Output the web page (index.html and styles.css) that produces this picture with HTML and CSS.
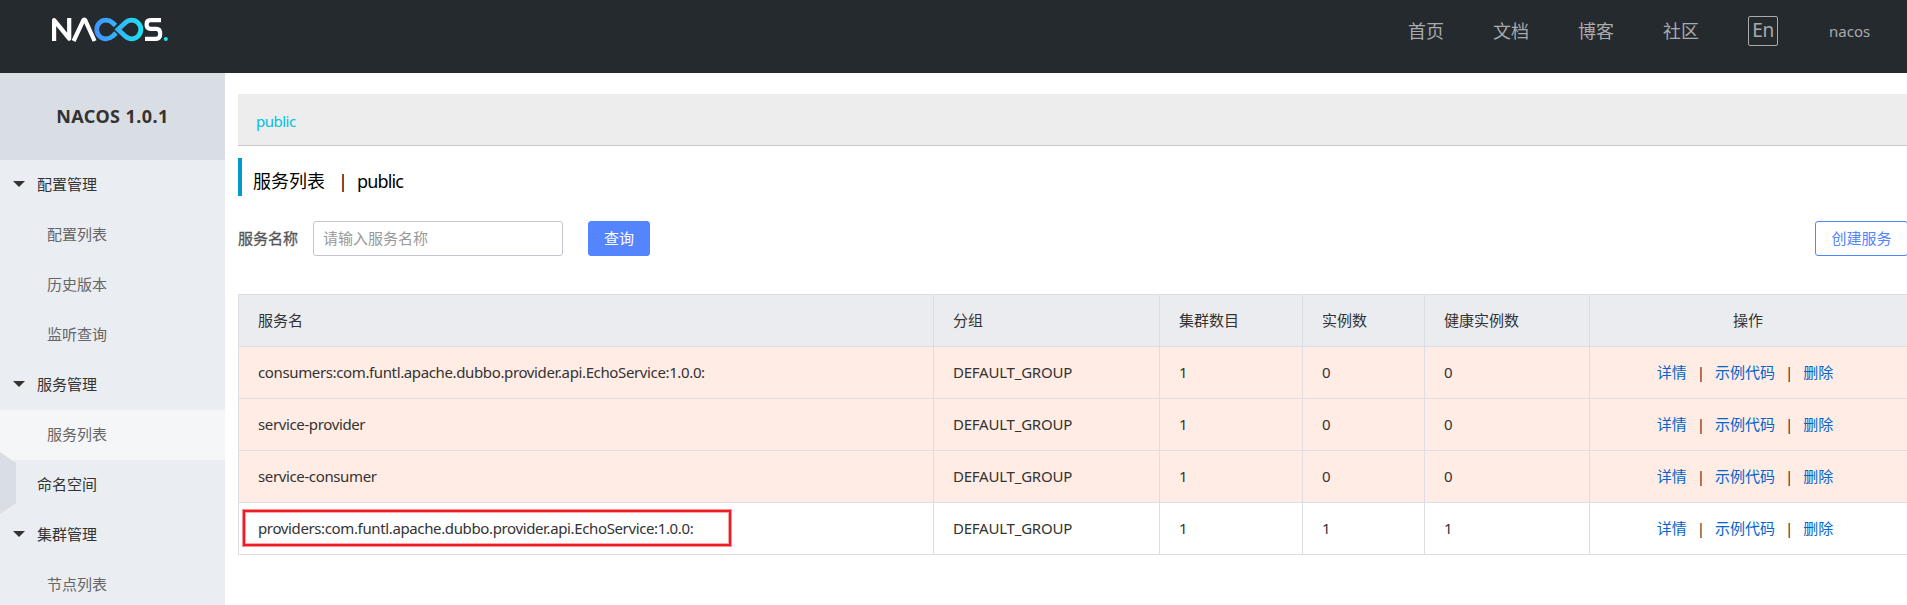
FILE: index.html
```html
<!DOCTYPE html>
<html lang="zh-CN">
<head>
<meta charset="utf-8">
<title>Nacos</title>
<link rel="stylesheet" href="styles.css">
</head>
<body>
<header class="header">
  <svg class="logo" width="118" height="26" viewBox="0 0 118 26" fill="none">
    <defs>
      <linearGradient id="loop" gradientUnits="userSpaceOnUse" x1="44" y1="0" x2="92" y2="0">
        <stop offset="0" stop-color="#4590ff"/>
        <stop offset="1" stop-color="#1be3f2"/>
      </linearGradient>
    </defs>
    <g stroke="#fff" stroke-width="4.2" stroke-linejoin="round">
      <path d="M3.1 25V4.2L18.2 22.6V2"/>
      <path d="M22.6 25L32.4 4.1Q33.3 3.4 34.2 4.1L43.6 25"/>
      <path d="M110 4.1H99.6Q95.6 4.1 95.6 8.4Q95.6 12.8 99.6 12.8H105.4Q109.2 12.8 109.2 17.8Q109.2 22.8 105 22.8H94"/>
    </g>
    <g stroke="url(#loop)" stroke-width="4.8">
      <path d="M64.5 9.4L61.9 7Q58.6 4.2 54.9 4.2A9.2 9.3 0 0 0 54.9 22.8Q58.6 22.8 61.9 20L65 17"/>
      <path d="M67 13.5L74 7Q77 4.2 80.6 4.2A9.2 9.3 0 0 1 80.6 22.8Q77 22.8 74 20Z"/>
    </g>
    <circle cx="114.8" cy="23" r="2.1" fill="#1be3f2"/>
  </svg>
  <nav class="nav">
    <a class="nav-item">首页</a>
    <a class="nav-item">文档</a>
    <a class="nav-item">博客</a>
    <a class="nav-item">社区</a>
    <span class="lang">En</span>
    <span class="user">nacos</span>
  </nav>
</header>
<div class="layout">
  <aside class="sidebar">
    <h1 class="side-title"><span>NACOS 1.0.1</span></h1>
    <ul class="menu">
      <li class="group"><i class="caret"></i>配置管理</li>
      <li class="item">配置列表</li>
      <li class="item">历史版本</li>
      <li class="item">监听查询</li>
      <li class="group"><i class="caret"></i>服务管理</li>
      <li class="item active">服务列表</li>
      <li class="group">命名空间</li>
      <li class="group"><i class="caret"></i>集群管理</li>
      <li class="item">节点列表</li>
    </ul>
    <svg class="collapse" width="16" height="62" viewBox="0 0 16 62"><path d="M0 0L16 11V51L0 62Z" fill="#d9dde4"/></svg>
  </aside>
  <main class="main">
    <div class="namespace"><span>public</span></div>
    <h2 class="page-title"><span>服务列表</span><span class="bar">|</span><span class="space">public</span></h2>
    <form class="search">
      <label class="label" for="name">服务名称</label>
      <input class="input" id="name" placeholder="请输入服务名称">
      <button class="btn primary" type="button">查询</button>
      <button class="btn outline" type="button">创建服务</button>
    </form>
    <table class="table">
      <colgroup><col class="c-name"><col class="c-group"><col class="c-cluster"><col class="c-count"><col class="c-healthy"><col></colgroup>
      <thead>
        <tr><th>服务名</th><th>分组</th><th>集群数目</th><th>实例数</th><th>健康实例数</th><th class="ops">操作</th></tr>
      </thead>
      <tbody>
        <tr class="warn"><td><span class="svc">consumers:com.funtl.apache.dubbo.provider.api.EchoService:1.0.0:</span></td><td><span class="grp">DEFAULT_GROUP</span></td><td>1</td><td>0</td><td>0</td><td class="ops"><a>详情</a><i>|</i><a>示例代码</a><i>|</i><a>删除</a></td></tr>
        <tr class="warn"><td><span class="svc">service-provider</span></td><td><span class="grp">DEFAULT_GROUP</span></td><td>1</td><td>0</td><td>0</td><td class="ops"><a>详情</a><i>|</i><a>示例代码</a><i>|</i><a>删除</a></td></tr>
        <tr class="warn"><td><span class="svc">service-consumer</span></td><td><span class="grp">DEFAULT_GROUP</span></td><td>1</td><td>0</td><td>0</td><td class="ops"><a>详情</a><i>|</i><a>示例代码</a><i>|</i><a>删除</a></td></tr>
        <tr><td class="marked"><span class="svc">providers:com.funtl.apache.dubbo.provider.api.EchoService:1.0.0:</span></td><td><span class="grp">DEFAULT_GROUP</span></td><td>1</td><td>1</td><td>1</td><td class="ops"><a>详情</a><i>|</i><a>示例代码</a><i>|</i><a>删除</a></td></tr>
      </tbody>
    </table>
  </main>
</div>
</body>
</html>
```
FILE: styles.css
```css
*, *::after { box-sizing: border-box; }
html, body { height: 100%; }
body {
  margin: 0;
  overflow: hidden;
  background: #fff;
  color: #333;
  font: 15px/20px "Noto Sans", "Noto Sans CJK SC", sans-serif;
}
i { font-style: normal; }

.header {
  display: flex;
  justify-content: space-between;
  height: 73px;
  padding: 16px 35px 0 51px;
  background: #252a2f;
}
.logo { display: block; }
.nav { display: flex; align-items: center; height: 30px; color: #a8aaac; }
.nav-item { width: 36px; margin-right: 49px; font-size: 18px; white-space: nowrap; }
.lang {
  width: 30px;
  height: 30px;
  border: 1px solid #a8aaac;
  border-radius: 2px;
  font-size: 19px;
  letter-spacing: -0.5px;
  line-height: 27px;
  text-align: center;
}
.user { width: 43px; margin-left: 51px; font-size: 15px; }

.layout { display: flex; height: 532px; }
.sidebar { position: relative; flex: none; width: 225px; background: #eaedf1; }
.side-title {
  height: 87px;
  margin: 0;
  background: #d9dde4;
  font-size: 18px;
  letter-spacing: 0.45px;
  line-height: 87px;
  text-align: center;
}
.menu { margin: 0; padding: 0; list-style: none; }
.group, .item { display: flex; align-items: center; height: 50px; padding-bottom: 2px; }
.group { padding-left: 37px; color: #333; }
.item { padding-left: 47px; color: #666; }
.active { background: #f5f6f8; }
.caret {
  width: 12px;
  margin: 0 12px 1px -24px;
  border: 6px solid transparent;
  border-top-color: #333;
  border-bottom: 0;
}
.collapse { position: absolute; left: 0; top: 379px; }

.main { flex: 1; padding: 21px 0 0 13px; }
.namespace {
  height: 52px;
  padding: 17px 18px;
  border-bottom: 1px solid #c8c8c8;
  background: #ededed;
  color: #00c1de;
  letter-spacing: -0.5px;
}
.page-title {
  display: flex;
  align-items: center;
  height: 38px;
  margin: 12px 0 0;
  padding: 8px 0 0 11px;
  border-left: 4px solid #09c;
  color: #000;
  font-size: 18px;
  font-weight: 400;
}
.bar { margin: 0 9px 0 13px; }
.space { letter-spacing: -0.85px; }
.search { display: flex; align-items: center; margin: 25px 0 38px; }
.label { width: 75px; padding-bottom: 2px; color: #555; -webkit-text-stroke: 0.3px #555; }
.input {
  width: 250px;
  height: 35px;
  padding: 0 9px 2px;
  border: 1px solid #c4c6cf;
  border-radius: 3px;
  font: inherit;
}
.input::placeholder { color: #999; opacity: 1; }
.btn { height: 35px; padding: 0 0 2px; border: 1px solid #5584ff; border-radius: 3px; font: inherit; }
.primary { width: 62px; margin-left: 25px; background: #5584ff; color: #fff; }
.outline { width: 93px; margin-left: auto; background: #fff; color: #5584ff; }

.table { width: 1670px; table-layout: fixed; border-collapse: separate; border-spacing: 0; border: 1px solid #dcdee3; border-width: 1px 0 0 1px; }
.c-name { width: 695px; }
.c-group { width: 226px; }
.c-cluster { width: 143px; }
.c-count { width: 122px; }
.c-healthy { width: 165px; }
.table th, .table td {
  height: 52px;
  padding: 0 0 2px 19px;
  border: 1px solid #dcdee3;
  border-width: 0 1px 1px 0;
  font-weight: 400;
  text-align: left;
  white-space: nowrap;
}
.table th { background: #ebecf0; }
.warn { background: #ffece4; }
.svc { letter-spacing: -0.37px; }
.grp { letter-spacing: -0.22px; }
.table .ops { padding: 0 2px 2px 0; border-right: 0; text-align: center; }
.table td.ops { padding-right: 8px; }
.ops a { color: #06c; }
.ops i { margin: 0 10px; }
.marked { position: relative; }
.marked::after {
  content: "";
  position: absolute;
  left: 4px;
  top: 7px;
  width: 488px;
  height: 36px;
  border: 2px solid #ee1c25;
  box-shadow: 0 0 0 1px rgba(238, 28, 37, 0.5), inset 0 0 0 1px rgba(238, 28, 37, 0.4);
}
```
